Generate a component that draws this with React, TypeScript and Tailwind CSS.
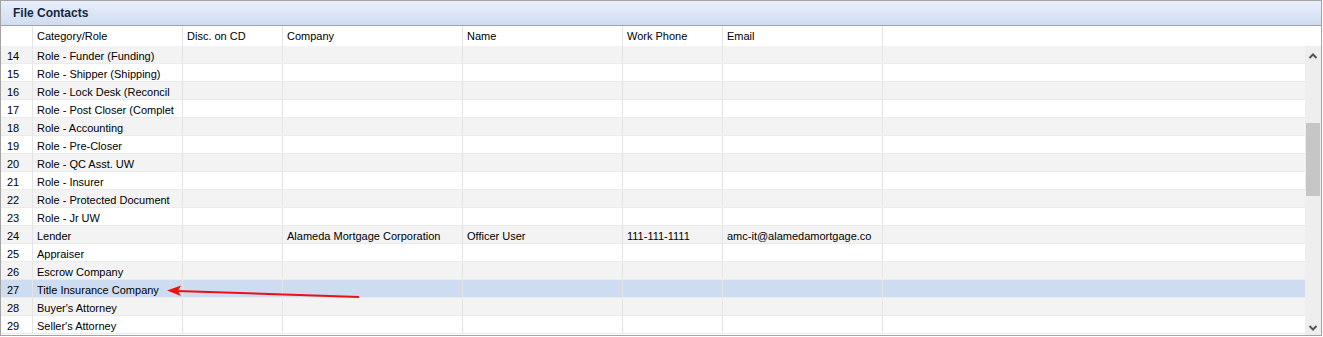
import React from "react";

const cols = [
  { key: "n", label: "", w: 32 },
  { key: "role", label: "Category/Role", w: 150 },
  { key: "disc", label: "Disc. on CD", w: 100 },
  { key: "company", label: "Company", w: 180 },
  { key: "name", label: "Name", w: 160 },
  { key: "phone", label: "Work Phone", w: 100 },
  { key: "email", label: "Email", w: 160 },
];

const rows: Record<string, string>[] = [
  { n: "14", role: "Role - Funder (Funding)" },
  { n: "15", role: "Role - Shipper (Shipping)" },
  { n: "16", role: "Role - Lock Desk (Reconcil" },
  { n: "17", role: "Role - Post Closer (Complet" },
  { n: "18", role: "Role - Accounting" },
  { n: "19", role: "Role - Pre-Closer" },
  { n: "20", role: "Role - QC Asst. UW" },
  { n: "21", role: "Role - Insurer" },
  { n: "22", role: "Role - Protected Document" },
  { n: "23", role: "Role - Jr UW" },
  {
    n: "24",
    role: "Lender",
    company: "Alameda Mortgage Corporation",
    name: "Officer User",
    phone: "111-111-1111",
    email: "amc-it@alamedamortgage.co",
  },
  { n: "25", role: "Appraiser" },
  { n: "26", role: "Escrow Company" },
  { n: "27", role: "Title Insurance Company" },
  { n: "28", role: "Buyer's Attorney" },
  { n: "29", role: "Seller's Attorney" },
];

export default function App() {
  return (
    <div className="w-[1323px] h-[337px] bg-white font-['Liberation_Sans',Arial,sans-serif] text-[11px] text-black">
      <div className="w-[1322px] h-[336px] border border-[#a3a3a3] flex flex-col overflow-hidden">
        {/* Title */}
        <div className="h-[25px] shrink-0 bg-gradient-to-b from-[#e8effc] to-[#cfdcf1] border-b border-[#a3a3a3] flex items-center pl-[12px] font-bold text-[12px] text-[#15273f]">
          File Contacts
        </div>

        {/* Header */}
        <div className="h-[20px] shrink-0 flex bg-white">
          {cols.map((c) => (
            <div
              key={c.key}
              style={{ width: c.w }}
              className="shrink-0 border-r border-[#e4e4e4] pl-[4px] pt-[4px] leading-[12px]"
            >
              {c.label}
            </div>
          ))}
          <div className="flex-1" />
        </div>

        {/* Body */}
        <div className="flex-1 flex relative">
          <div className="flex-1 flex flex-col">
            {rows.map((r, i) => {
              const sel = r.n === "27";
              const bg = sel ? "bg-[#cddcf1]" : i % 2 === 0 ? "bg-[#f3f3f3]" : "bg-white";
              return (
                <div key={r.n} className={`h-[18px] shrink-0 flex border-b border-[#ebebeb] ${bg}`}>
                  {cols.map((c) => (
                    <div
                      key={c.key}
                      style={{ width: c.w }}
                      className={`shrink-0 border-r border-[#e4e4e4] pt-[4px] leading-[12px] whitespace-nowrap overflow-hidden ${
                        c.key === "n" ? "pl-[6px]" : "pl-[4px]"
                      }`}
                    >
                      {r[c.key] ?? ""}
                    </div>
                  ))}
                  <div className="flex-1" />
                </div>
              );
            })}
          </div>

          {/* Scrollbar */}
          <div className="w-[16px] shrink-0 bg-[#eeeeee] flex flex-col items-center">
            <svg width="10" height="8" viewBox="0 0 10 8" className="mt-[6px]">
              <path d="M1.5 6 L5 2.5 L8.5 6" stroke="#555" strokeWidth="2" fill="none" />
            </svg>
            <div className="w-[14px] h-[73px] bg-[#c6c6c6] mt-[63px]" />
            <div className="flex-1" />
            <svg width="10" height="8" viewBox="0 0 10 8" className="mb-[3px]">
              <path d="M1.5 2 L5 5.5 L8.5 2" stroke="#555" strokeWidth="2" fill="none" />
            </svg>
          </div>

          {/* Annotation arrow */}
          <svg className="absolute left-0 top-0 pointer-events-none" width="400" height="290">
            <line x1="358" y1="251" x2="176" y2="245" stroke="#ee1111" strokeWidth="2" />
            <path d="M166 244.5 L180 239.5 L177 245 L180 250 Z" fill="#ee1111" />
          </svg>
        </div>
      </div>
    </div>
  );
}
